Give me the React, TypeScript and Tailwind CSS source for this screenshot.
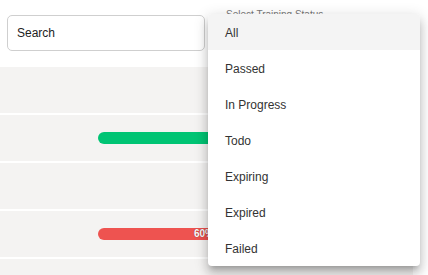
import React from "react";

const items = ["All", "Passed", "In Progress", "Todo", "Expiring", "Expired", "Failed"];

export default function App() {
  return (
    <div
      className="relative w-[428px] h-[275px] overflow-hidden bg-white"
      style={{ fontFamily: '"Liberation Sans", Arial, sans-serif' }}
    >
      <div className="h-[67px] flex items-start pt-[15px] pl-[7px] gap-[4px]">
        <div className="w-[198px] h-[36px] rounded-[5px] border border-[#cfcfcf] flex items-center pl-[9px] text-[12px] text-[#222]">
          Search
        </div>
        <div className="relative w-[210px] h-[36px] rounded-[5px] border border-[#cfcfcf]">
          <span className="absolute left-[15px] -top-[7px] bg-white px-[1px] text-[10px] leading-[12px] text-[#777]">
            Select Training Status
          </span>
        </div>
      </div>
      <div className="w-[413px] bg-[#f4f3f2]">
        <div className="h-[48px] border-b-2 border-white" />
        <div className="h-[48px] border-b-2 border-white flex items-center pl-[98px]">
          <div className="w-[200px] h-[12px] rounded-full bg-[#00c474]" />
        </div>
        <div className="h-[48px] border-b-2 border-white" />
        <div className="h-[48px] border-b-2 border-white flex items-center pl-[98px]">
          <div className="w-[200px] h-[12px]">
            <div className="w-[120px] h-[12px] rounded-full bg-[#ee5350] flex items-center justify-end pr-[4px]">
              <span className="text-[10px] font-bold leading-[12px] text-white [text-shadow:0_0_1px_rgba(0,0,0,0.5)]">60%</span>
            </div>
          </div>
        </div>
        <div className="h-[48px]" />
      </div>
      <div className="absolute left-[208px] top-[14px] w-[212px] bg-white rounded-[4px] overflow-hidden shadow-[0_5px_5px_-3px_rgba(0,0,0,0.2),0_8px_10px_1px_rgba(0,0,0,0.14),0_3px_14px_2px_rgba(0,0,0,0.12)]">
        {items.map((it, i) => (
          <div
            key={it}
            className={
              i === 0
                ? "h-[36px] flex items-center pl-[17px] pt-[2px] text-[12px] text-[#333] bg-[#f4f4f4]"
                : "h-[36px] flex items-center pl-[17px] pt-[2px] text-[12px] text-[#333]"
            }
          >
            {it}
          </div>
        ))}
      </div>
    </div>
  );
}
